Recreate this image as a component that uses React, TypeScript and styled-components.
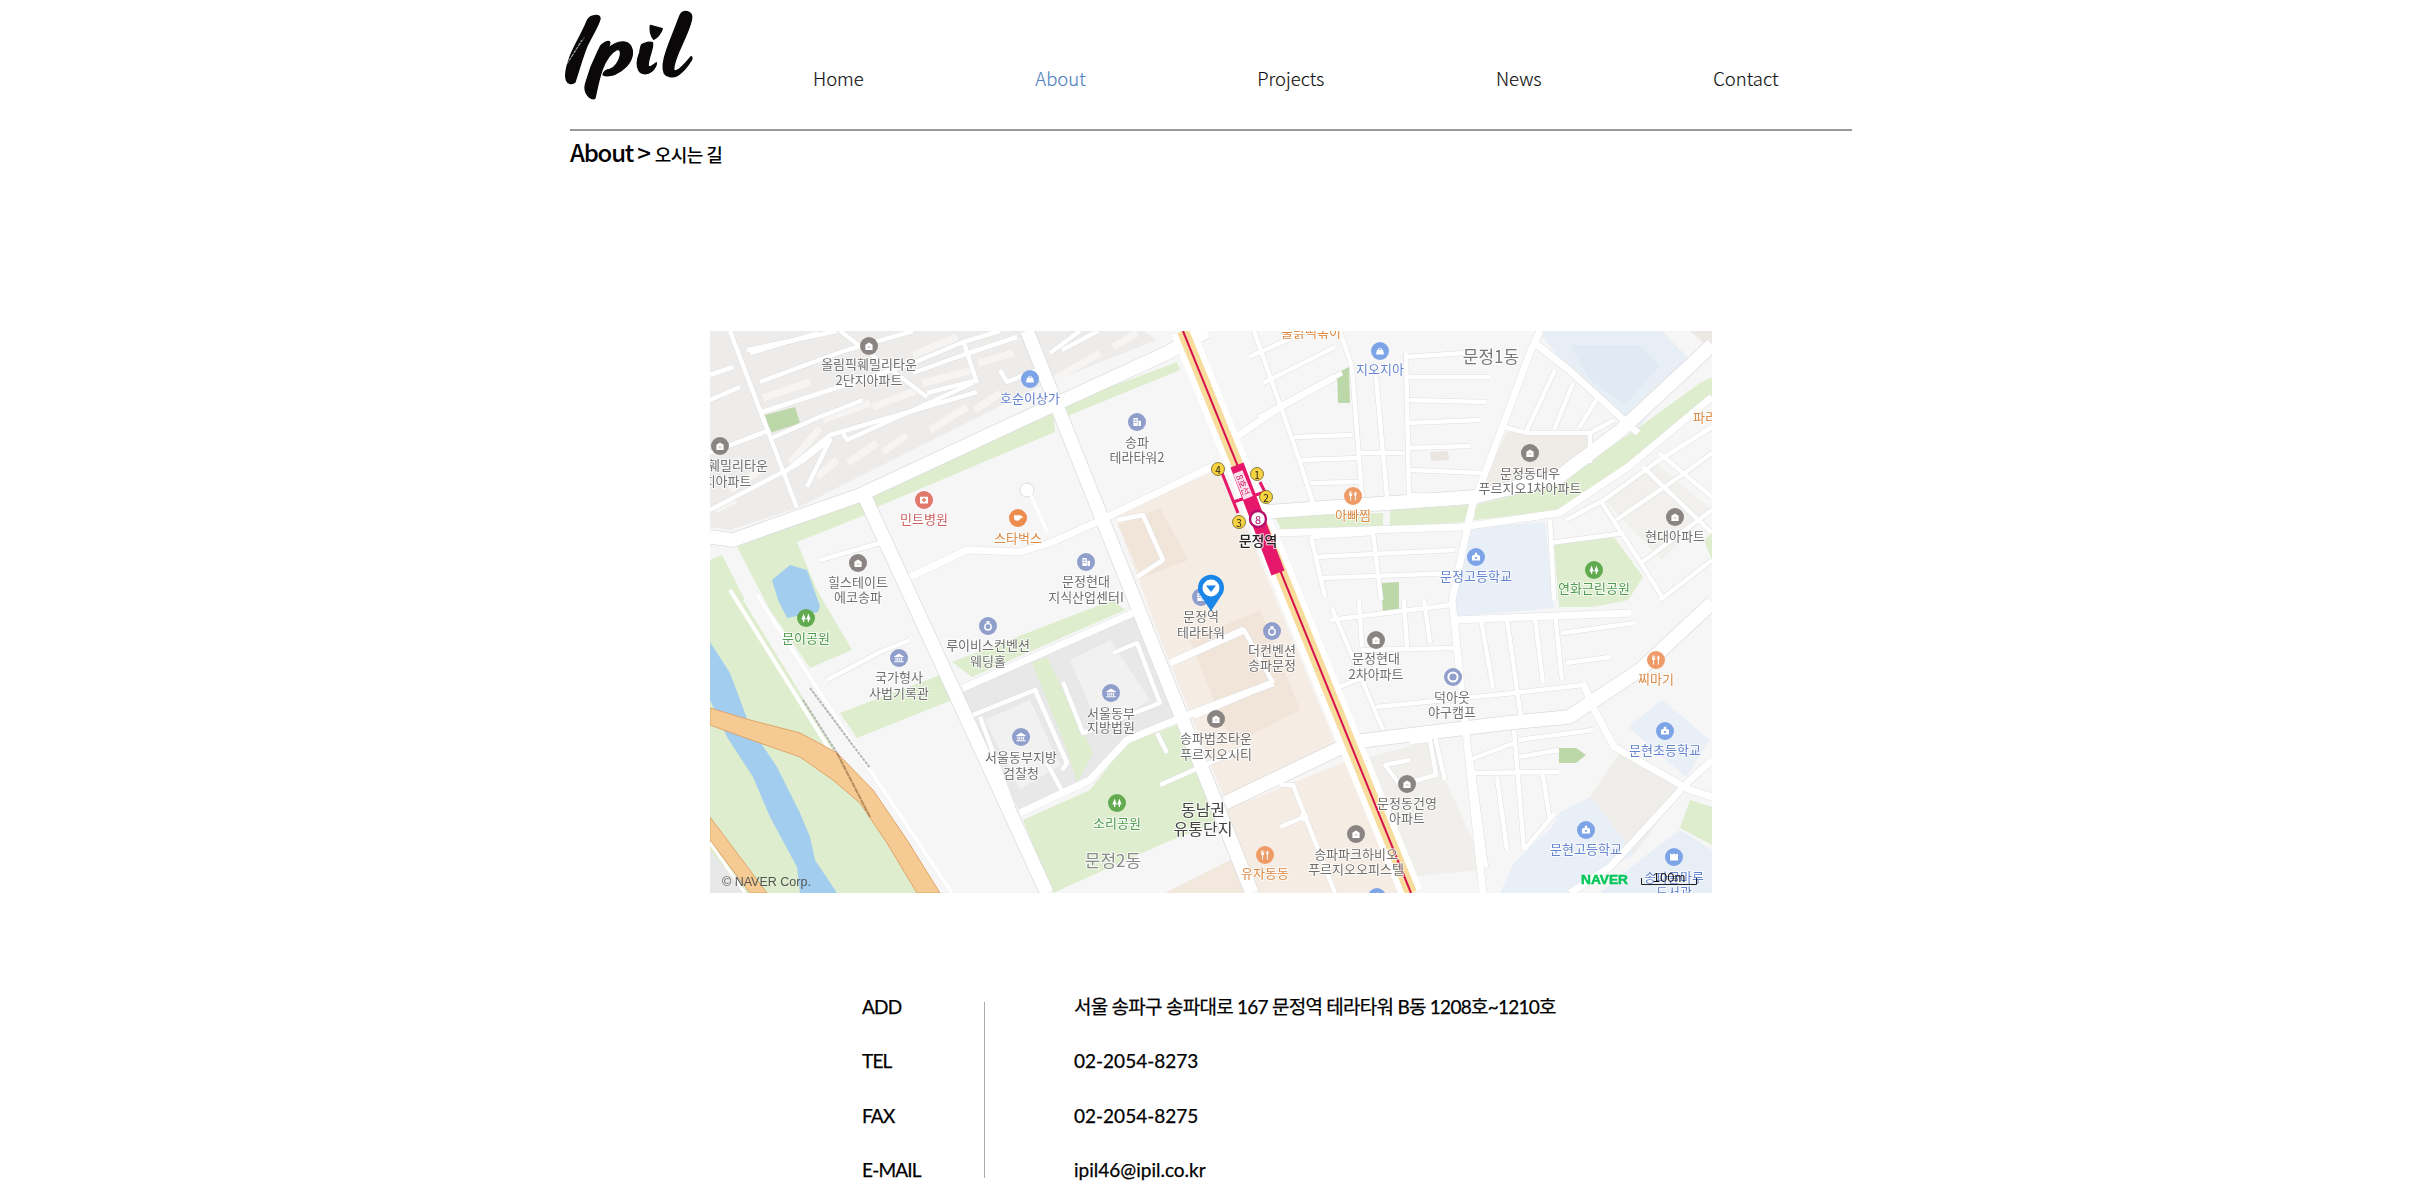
import { Fragment } from 'react'
import styled, { createGlobalStyle } from 'styled-components'

const GlobalStyle = createGlobalStyle`
  html, body {
    margin: 0;
    padding: 0;
    height: 100%;
    overflow: hidden;
    background: #fff;
  }
  body {
    font-family: "Noto Sans CJK KR", "Noto Sans", sans-serif;
    color: #000;
  }
`

const Page = styled.div`
  width: 1282px;
  margin: 0 auto;
  transform: translateX(-1px);
`

const Header = styled.header`
  display: flex;
  height: 129px;
  border-bottom: 2px solid #999;
  box-sizing: content-box;
`

const LogoBox = styled.a`
  display: block;
  flex: none;
  width: 262px;
  height: 110px;
  margin-left: -19px;
`

const Nav = styled.nav`
  display: flex;
  gap: 171.5px;
  flex: none;
  height: 100%;
  padding-top: 62px;
  box-sizing: border-box;
`

const NavItem = styled.a<{ $active?: boolean }>`
  font-size: 18.5px;
  font-weight: 300;
  line-height: 32px;
  -webkit-text-stroke: 0.15px currentColor;
  color: ${p => (p.$active ? '#4f81bd' : '#111')};
`

const Crumb = styled.div`
  display: flex;
  align-items: baseline;
  height: 39px;
  padding-top: 2px;
  font-size: 24px;
  font-weight: 500;
  line-height: 38px;
  letter-spacing: -1.2px;

  span {
    margin-left: 5px;
    font-size: 18px;
    letter-spacing: -0.6px;
  }
`

const MapFrame = styled.svg`
  display: block;
  width: 1002px;
  height: 562px;
  margin: 159px auto 0;
  background: #f6f6f7;
  filter: blur(0.35px);
`

const Label = styled.text<{ $color?: string; $size?: number; $bold?: boolean }>`
  font-family: "Noto Sans CJK KR", sans-serif;
  font-size: ${p => p.$size ?? 13}px;
  font-weight: ${p => (p.$bold ? 500 : 400)};
  fill: ${p => p.$color ?? '#6f6f6f'};
  text-anchor: middle;
  dominant-baseline: central;
  paint-order: stroke;
  stroke: rgba(255, 255, 255, 0.75);
  stroke-width: 2px;
`

const Credit = styled.text`
  font-family: "Liberation Sans", sans-serif;
  font-size: 12.5px;
  fill: #555;
`

const Brand = styled.text`
  font-family: "Liberation Sans", sans-serif;
  font-size: 13px;
  font-weight: 700;
  fill: #03c75a;
  stroke: #03c75a;
  stroke-width: 0.5px;
`

const Scale = styled.text`
  font-family: "Liberation Sans", sans-serif;
  font-size: 13px;
  fill: #111;
  text-anchor: middle;
`

const Info = styled.dl`
  position: relative;
  display: grid;
  grid-template-columns: 212px 1fr;
  grid-auto-rows: 54.3px;
  width: 990px;
  margin: 99px 0 0 292px;
  font-family: "Lato", "Noto Sans CJK KR", sans-serif;
  font-size: 19px;
  font-weight: 400;
  line-height: 30px;
  -webkit-text-stroke: 0.25px #000;

  &::before {
    content: "";
    position: absolute;
    left: 122px;
    top: 10px;
    width: 1px;
    height: 176px;
    background: #aaa;
  }
`

const Term = styled.dt`
  margin: 0;
  letter-spacing: -0.8px;
`

const Value = styled.dd<{ $tight?: boolean }>`
  margin: 0;
  letter-spacing: ${p => (p.$tight ? '-0.74px' : '0')};
`

type Area = [string, string]

const GRASS = '#deedcd'
const SCHOOL = '#e9eff7'

const areas: Area[] = [
  // apartments north west
  ['#eeecea', '710,331 1024,331 1042,385 797,508 730,530 710,527'],
  ['#eeecea', '1030,331 1048,383 1157,340 1143,331'],
  // green strips
  [GRASS, '870,492 1053,410 1055,432 877,507'],
  [GRASS, '1062,405 1177,362 1180,370 1065,417'],
  [GRASS, '737,547 863,497 870,513 797,542 817,590 852,650 810,668 770,610'],
  ['#a2cdef', '772,580 790,565 807,570 820,606 818,612 787,618 778,600'],
  [GRASS, '710,560 722,555 745,600 837,753 925,893 710,893'],
  ['#a2cdef', '710,642 730,673 745,713 750,727 777,767 800,813 810,837 815,860 837,893 800,893 797,867 770,817 753,777 727,737 710,700'],
  ['#e8e8e9', '963,692 1133,613 1178,717 1127,740 1090,780 1063,793 1020,813 973,717'],
  ['#f1f1f2', '1070,660 1110,640 1150,700 1100,730'],
  ['#f1f1f2', '985,720 1030,700 1060,765 1020,790'],
  [GRASS, '952,662 1113,600 1125,610 972,677'],
  [GRASS, '1032,663 1047,657 1093,753 1077,783 1067,750'],
  [GRASS, '840,713 940,675 952,700 857,738'],
  [GRASS, '1023,820 1090,790 1127,743 1182,723 1230,817 1167,842 1053,893'],
  // peach blocks along the boulevard
  ['#f5ece4', '1115,515 1222,468 1338,750 1225,800 1155,625'],
  ['#f1e4d9', '1118,525 1160,508 1188,560 1142,578'],
  ['#f1e4d9', '1190,640 1260,610 1300,710 1232,745'],
  ['#f5ece4', '1220,812 1345,762 1400,893 1258,893'],
  ['#f3e8de', '1120,893 1165,893 1230,860 1250,893'],
  ['#f1efec', '1369,757 1435,740 1445,780 1476,847 1480,870 1407,877'],
  // schools and blocks to the east
  [SCHOOL, '1466,528 1545,522 1554,608 1455,617 1452,600'],
  ['#e8eef5', '1538,331 1662,331 1693,363 1638,428 1593,397 1569,370'],
  ['#e1e9f2', '1570,345 1640,345 1660,365 1625,405 1590,380'],
  [GRASS, '1554,543 1614,537 1643,577 1628,600 1593,607 1559,607'],
  ['#e9eff6', '1559,813 1590,797 1635,853 1572,893 1500,893 1514,863 1552,827'],
  ['#e9eff6', '1628,727 1662,700 1710,740 1686,777'],
  ['#efedea', '1590,797 1620,753 1683,787 1635,853'],
  ['#e8eef5', '1640,860 1680,830 1712,850 1712,893 1600,893'],
  [GRASS, '1690,800 1712,807 1712,845 1680,828'],
  ['#efece8', '1507,432 1590,435 1590,463 1559,487 1490,490 1486,477'],
  ['#f2f0ed', '1604,500 1655,463 1712,510 1662,560'],
  [GRASS, '1275,517 1383,513 1383,527 1283,532'],
  [GRASS, '1390,510 1469,505 1464,522 1390,527'],
  [GRASS, '1476,505 1559,483 1628,435 1700,383 1712,377 1712,397 1628,463 1559,510 1474,520'],
  // small dark green lots
  ['#bcd8a8', '765,415 795,407 800,423 770,433'],
  ['#bcd8a8', '1337,373 1349,367 1350,403 1338,403'],
  ['#bcd8a8', '1381,583 1399,582 1399,613 1383,613'],
  ['#bcd8a8', '1559,748 1576,748 1586,755 1576,763 1559,763'],
  ['#e9e6e1', '1430,452 1448,451 1449,460 1431,461'],
  ['#ece9e4', '1690,331 1712,331 1712,350'],
  [GRASS, '1704,540 1712,533 1712,560'],
  ['#e9e8e8', '710,850 745,893 710,893'],
]

const buildingStrips: string[] = [
  '763,398 810,382', '823,420 870,403', '873,407 917,390', '913,355 957,337', '978,363 1013,353', '923,383 973,370',
  '790,463 820,428', '817,477 837,460', '848,463 877,443', '883,452 907,435', '930,430 967,407', '975,410 1000,393',
  '1053,380 1100,353', '1113,347 1137,333', '730,490 760,470', '715,510 735,500',
]

const bigRoads: string[] = [
  '710,537 733,540 860,495 1047,408 1167,353 1207,331',
  '1027,331 1252,893',
  '863,493 1047,893',
  '1225,803 1342,747',
  '1352,742 1507,723 1569,717 1640,670 1712,603',
  '1266,512 1473,497 1559,477 1621,430 1693,363 1712,345',
]

const midRoads: string[] = [
  '910,577 967,550 1020,552 1050,543 1097,522 1222,462',
  '1232,440 1280,407 1335,377',
  '1276,533 1462,527 1559,513 1628,467 1712,397',
  '1452,600 1472,507 1490,460 1531,350 1540,331',
  '1452,600 1466,733 1483,893',
  '1455,620 1631,613',
  '1535,343 1569,370 1638,433',
  '1570,893 1610,867 1690,780 1712,760',
  '963,688 1133,613',
  '1170,663 1244,630',
  '1020,813 1090,780 1127,740 1193,713 1273,683',
  '1593,707 1614,747 1690,790 1712,797',
  '1583,683 1593,707',
]

const smallRoads: string[] = [
  '730,331 797,508',
  '772,438 817,418 863,400',
  '762,412 913,363 963,342 1000,331',
  '785,472 830,435 977,392',
  '843,433 847,440 973,383',
  '750,353 818,333', '760,382 827,357 847,350 913,331', '913,373 963,355 1017,337', '927,393 977,380', '1000,370 1007,382 1037,370',
  '1050,353 1080,331', '1062,350 1098,331',
  '710,400 740,387', '710,375 733,367', '747,350 837,331',
  '840,331 927,397', '963,340 977,383', '800,463 830,440 807,487',
  '710,453 770,430', '710,510 800,463',
  '820,560 880,543', '1117,520 1143,515 1163,560 1137,577',
  '973,715 1035,690 1067,763 1062,770', '980,717 1013,807', '1063,682 1083,733 1160,703 1137,643 1113,653',
  '1047,763 1063,793', '827,680 880,652 910,640', '1157,733 1167,753',
  '1180,660 1244,630 1273,683', '1194,717 1273,683',
  '1352,367 1362,497', '1376,377 1387,497', '1406,353 1409,497',
  '1254,331 1297,453 1313,503', '1340,331 1352,367',
  '1259,417 1342,373', '1263,383 1335,347', '1249,357 1307,331',
  '1407,377 1490,377', '1407,400 1486,402', '1407,423 1480,420', '1407,448 1470,446', '1410,470 1484,473', '1410,495 1473,497',
  '1294,437 1352,435', '1300,460 1359,458', '1311,483 1359,482', '1359,453 1404,453', '1404,357 1466,353',
  '1504,427 1528,433 1590,433 1590,463', '1526,432 1555,370', '1554,430 1573,383', '1579,428 1598,397', '1590,433 1614,420',
  '1566,520 1604,500 1655,463 1712,427', '1616,520 1679,477 1712,453', '1600,500 1641,563 1662,597',
  '1643,467 1712,533', '1659,453 1712,497', '1641,563 1712,510', '1660,600 1712,560',
  '1311,537 1373,533 1381,600', '1314,557 1455,550', '1321,578 1455,573', '1311,537 1325,597', '1550,520 1554,600', '1550,543 1624,533',
  '1404,600 1407,647', '1424,600 1430,643', '1481,620 1493,688', '1507,620 1521,717', '1535,617 1543,683', '1555,613 1562,680',
  '1562,633 1635,623', '1566,663 1610,657', '1332,608 1383,730', '1359,600 1362,647', '1362,650 1455,648',
  '1376,707 1514,693 1583,685', '1332,690 1376,672', '1330,620 1450,605',
  '1435,737 1445,780', '1466,737 1473,773', '1514,730 1524,850', '1469,773 1559,772', '1469,760 1514,743', '1519,740 1593,730',
  '1519,757 1559,750', '1473,773 1486,867', '1497,777 1507,850', '1542,770 1550,820', '1524,850 1555,813',
  '1410,742 1430,740 1436,775 1400,785 1385,765 1410,760',
  '1280,785 1293,785 1335,893', '1280,827 1304,817', '1250,745 1160,785',
]

type Poi = [number, number, string, string]

const pois: Poi[] = [
  [869, 346, '#8a8583', 'home'], [720, 446, '#8a8583', 'home'], [858, 563, '#8a8583', 'home'],
  [1530, 453, '#8a8583', 'home'], [1675, 517, '#8a8583', 'home'], [1376, 640, '#8a8583', 'home'],
  [1216, 719, '#8a8583', 'home'], [1407, 784, '#8a8583', 'home'], [1356, 834, '#8a8583', 'home'],
  [1030, 379, '#7ea4e8', 'bag'], [1380, 351, '#7ea4e8', 'bag'],
  [1137, 422, '#8f9ecb', 'office'], [1086, 562, '#8f9ecb', 'office'], [1201, 597, '#8f9ecb', 'office'],
  [924, 500, '#e0786c', 'cross'], [1018, 518, '#ee8c50', 'cup'],
  [806, 618, '#61aa50', 'tree'], [1117, 803, '#61aa50', 'tree'], [1594, 570, '#61aa50', 'tree'],
  [988, 626, '#8f9ecb', 'ring'], [1272, 631, '#8f9ecb', 'ring'],
  [899, 658, '#8f9ecb', 'hall'], [1111, 693, '#8f9ecb', 'hall'], [1021, 737, '#8f9ecb', 'hall'],
  [1353, 496, '#ef9b68', 'fork'], [1656, 660, '#ef9b68', 'fork'], [1265, 855, '#ef9b68', 'fork'],
  [1476, 557, '#7ea4e8', 'school'], [1586, 830, '#7ea4e8', 'school'], [1665, 731, '#7ea4e8', 'school'],
  [1674, 857, '#7ea4e8', 'book'], [1453, 677, '#8f9ecb', 'target'], [1377, 897, '#7ea4e8', 'school'],
]

type Text = [number, number, string, string?, number?, boolean?]

const BLUE = '#6484cf'
const ORANGE = '#dc8a45'
const GREEN = '#4f9a4f'

const labels: Text[] = [
  [869, 363, '올림픽훼밀리타운'], [869, 379, '2단지아파트'], [1030, 397, '호순이상가', BLUE],
  [720, 464, '올림픽훼밀리타운'], [718, 480, '1단지아파트'],
  [1137, 441, '송파'], [1137, 456, '테라타워2'], [924, 518, '민트병원', '#cc5f5f'], [1018, 537, '스타벅스', ORANGE],
  [858, 581, '힐스테이트'], [858, 596, '에코송파'], [1086, 580, '문정현대'], [1086, 596, '지식산업센터I'],
  [806, 637, '문이공원', GREEN], [988, 644, '루이비스컨벤션'], [988, 660, '웨딩홀'], [899, 676, '국가형사'], [899, 692, '사법기록관'],
  [1111, 712, '서울동부'], [1111, 726, '지방법원'], [1021, 756, '서울동부지방'], [1021, 772, '검찰청'],
  [1117, 822, '소리공원', GREEN], [1113, 859, '문정2동', '#8a8a8a', 17], [1203, 809, '동남권', '#444', 16], [1203, 828, '유통단지', '#444', 16],
  [1201, 615, '문정역'], [1201, 631, '테라타워'], [1272, 649, '더컨벤션'], [1272, 664, '송파문정'],
  [1376, 657, '문정현대'], [1376, 673, '2차아파트'], [1452, 696, '덕아웃'], [1452, 711, '야구캠프'], [1656, 678, '찌마기', ORANGE],
  [1216, 737, '송파법조타운'], [1216, 753, '푸르지오시티'], [1407, 802, '문정동건영'], [1407, 817, '아파트'],
  [1356, 853, '송파파크하비오'], [1356, 868, '푸르지오오피스텔'], [1265, 872, '유자동동', ORANGE],
  [1586, 848, '문현고등학교', BLUE], [1665, 749, '문현초등학교', BLUE], [1674, 876, '송파글마루', BLUE], [1674, 891, '도서관', BLUE],
  [1380, 368, '지오지아', BLUE], [1491, 355, '문정1동', '#777', 17], [1530, 472, '문정동대우'], [1530, 487, '푸르지오1차아파트'],
  [1353, 514, '아빠찜', ORANGE], [1258, 540, '문정역', '#222', 14, true], [1675, 535, '현대아파트'], [1476, 575, '문정고등학교', BLUE],
  [1594, 587, '연화근린공원', GREEN], [1723, 416, '파리바게뜨', ORANGE], [1311, 331, '불닭떡볶이', ORANGE],
]

const Glyph = ({ kind }: { kind: string }) => {
  switch (kind) {
    case 'home':
      return <path d="M-4.5 5V-1.5L0 -4.5L4.5 -1.5V5ZM-1.5 0.5V2H-0.4V0.5ZM0.6 0.5V2H1.7V0.5Z" fill="#fff" fillRule="evenodd" />
    case 'bag':
      return <path d="M-5 4.5L-3.8 -1.5H-2.4C-2.4 -5 2.4 -5 2.4 -1.5H3.8L5 4.5ZM-1.4 -1.5H1.4C1.4 -3.6 -1.4 -3.6 -1.4 -1.5Z" fill="#fff" fillRule="evenodd" />
    case 'office':
      return <path d="M-4.5 -5H1V5H-4.5ZM1.8 -1.5H5V5H1.8ZM-3.2 -3V-1.6H-0.4V-3ZM-3.2 0V1.4H-0.4V0Z" fill="#fff" fillRule="evenodd" />
    case 'cross':
      return <path d="M-5 -4H5V4.5H-5ZM-0.9 -2.6V-0.9H-2.6V0.9H-0.9V2.6H0.9V0.9H2.6V-0.9H0.9V-2.6Z" fill="#fff" fillRule="evenodd" />
    case 'cup':
      return <path d="M-5 -3.5H3V0C3 2 1.5 3.5 -1 3.5C-3.5 3.5 -5 2 -5 0ZM3 -2.8H5.5V0.2H3Z" fill="#fff" />
    case 'tree':
      return <path d="M-3 -5.5L-0.2 2H-2.2V5H-3.8V2H-5.8ZM3 -5.5L5.8 2H3.8V5H2.2V2H0.2Z" fill="#fff" />
    case 'ring':
      return (
        <>
          <circle cy={1} r={4} fill="none" stroke="#fff" strokeWidth={1.8} />
          <path d="M-2.5 -6H2.5L1.2 -3H-1.2Z" fill="#fff" />
        </>
      )
    case 'hall':
      return <path d="M0 -5.5L6 -2V-1H-6V-2ZM-4.5 0H-3V3.5H-4.5ZM-2.2 0H-0.8V3.5H-2.2ZM0.2 0H1.6V3.5H0.2ZM2.5 0H4V3.5H2.5ZM-6 4H6V5.2H-6Z" fill="#fff" />
    case 'fork':
      return <path d="M-5 -5.5V-1.5C-5 -0.3 -4.3 0.2 -3.6 0.4V5.5H-2.4V0.4C-1.7 0.2 -1 -0.3 -1 -1.5V-5.5L-1.8 -5.5V-2.5H-2.5V-5.5H-3.5V-2.5H-4.2V-5.5ZM3 -5.5C1.2 -4 1.2 -1 2.4 0.4V5.5H3.6V0.4C4.8 -1 4.8 -4 3 -5.5Z" fill="#fff" />
    case 'school':
      return <path d="M-5 4.5V-1.5L-1.5 -2.8V-5L1.5 -5.5V-2.8L5 -1.5V4.5ZM-1.3 0V2.2H1.3V0Z" fill="#fff" fillRule="evenodd" />
    case 'book':
      return <path d="M-5 -4.5L-2.5 -3L0 -4.5L2.5 -3L5 -4.5V4.5H-5Z" fill="#fff" />
    case 'target':
      return (
        <>
          <circle r={7} fill="#fff" />
          <circle r={4.5} fill="#8f9ecb" />
        </>
      )
    default:
      return null
  }
}

const Logo = () => (
  <svg viewBox="0 0 480 330" width="160" height="110" xmlns="http://www.w3.org/2000/svg">
    <g fill="#0a0808" stroke="#0a0808" strokeWidth={4} strokeLinejoin="round">
      <path d="M126 48C135 44 148 46 147 56C146 70 122 108 108 138C96 166 84 210 72 246C64 254 50 252 46 240C40 222 46 200 58 168C72 132 96 96 108 64C112 54 118 50 126 48Z" />
      <path d="M152 134C160 128 172 122 176 126C178 132 172 142 170 146C182 136 200 124 218 126C238 128 246 144 244 164C240 190 218 212 190 224C176 228 162 228 156 224C158 216 166 208 176 208C192 204 204 184 208 166C210 152 206 146 196 150C180 158 164 182 154 208C144 234 138 268 132 294C126 300 116 294 110 286C102 276 100 264 104 250C114 214 132 172 142 152C146 144 148 138 152 134Z" />
      <path d="M298 76L334 86C330 100 318 114 308 118C300 108 296 90 298 76Z" />
      <path d="M272 134C282 128 298 124 304 128C308 134 302 150 298 164C294 178 290 192 292 198C296 204 306 196 316 188C318 192 312 206 302 214C290 224 272 224 264 212C256 198 258 178 266 158C268 150 268 140 272 134Z" />
      <path d="M396 36C406 32 422 36 422 50C424 68 404 108 392 136C380 162 368 190 368 208C370 216 378 212 386 206C398 196 412 180 420 170C424 170 424 176 420 182C410 198 396 216 380 226C364 234 346 230 340 220C332 204 338 176 348 148C360 114 376 76 384 54C388 44 390 38 396 36Z" />
    </g>
    <path d="M48 192L100 112M54 182L92 120" stroke="#fff" strokeWidth={1.5} strokeDasharray="10 3" fill="none" />
  </svg>
)

const IpilMap = () => (
  <MapFrame viewBox="710 331 1002 562" xmlns="http://www.w3.org/2000/svg">
    {areas.map(([color, points], i) => (
      <polygon key={i} points={points} fill={color} />
    ))}
    {buildingStrips.map((points, i) => (
      <polyline key={i} points={points} fill="none" stroke="#f6f5f3" strokeWidth={7} />
    ))}
    {/* rail corridor */}
    <polygon points="743,600 837,753 925,893 952,893 870,770 757,590" fill="#f6f6f7" />
    <polyline points="730,590 830,750 925,893" fill="none" stroke="#fff" strokeWidth={4} />
    <polyline points="757,595 870,770 952,893" fill="none" stroke="#fff" strokeWidth={3} />
    <polyline points="810,688 870,768" fill="none" stroke="#b5b5b5" strokeWidth={2} strokeDasharray="3 1" />
    <polyline points="803,700 837,753" fill="none" stroke="#b5b5b5" strokeWidth={2} strokeDasharray="3 1" />

    {/* expressway */}
    <polygon
      points="710,708 750,720 800,733 837,753 873,790 907,840 940,893 917,893 887,843 860,803 833,780 800,757 757,742 710,725"
      fill="#f6cb93"
      stroke="#dfa468"
    />
    <polyline points="837,753 870,817" fill="none" stroke="#b58d5e" strokeWidth={2} strokeDasharray="6 0.6" />
    <polygon points="710,817 767,893 750,893 710,840" fill="#f6cb93" stroke="#dfa468" />
    <polyline points="710,843 745,893" fill="none" stroke="#fff" strokeWidth={3} />

    {bigRoads.map((points, i) => (
      <polyline key={i} points={points} fill="none" stroke="#dcdcdc" strokeWidth={15} strokeLinejoin="round" />
    ))}
    {midRoads.map((points, i) => (
      <polyline key={i} points={points} fill="none" stroke="#e2e2e2" strokeWidth={8} strokeLinejoin="round" />
    ))}
    {smallRoads.map((points, i) => (
      <polyline key={i} points={points} fill="none" stroke="#dedede" strokeWidth={5.5} strokeLinejoin="round" />
    ))}
    {bigRoads.map((points, i) => (
      <polyline key={i} points={points} fill="none" stroke="#fff" strokeWidth={13.5} strokeLinejoin="round" />
    ))}
    {midRoads.map((points, i) => (
      <polyline key={i} points={points} fill="none" stroke="#fff" strokeWidth={7} strokeLinejoin="round" />
    ))}
    {smallRoads.map((points, i) => (
      <polyline key={i} points={points} fill="none" stroke="#fff" strokeWidth={4.5} strokeLinejoin="round" />
    ))}
    <circle cx={1027} cy={490} r={7} fill="#fff" stroke="#ddd" />
    <polyline points="1031,495 1047,532" fill="none" stroke="#fff" strokeWidth={3} />
    <circle cx={1304} cy={817} r={4} fill="#fff" />

    {/* boulevard and subway line */}
    <polyline points="1183,331 1411,893" fill="none" stroke="#fff" strokeWidth={24} />
    <polyline points="1183,331 1411,893" fill="none" stroke="#f8dc9c" strokeWidth={12} />
    <polyline points="1183,331 1411,893" fill="none" stroke="#d5124f" strokeWidth={2} />

    {/* station */}
    <polyline points="1237,465 1278,573" fill="none" stroke="#e6186b" strokeWidth={14} />
    <polyline points="1222,473 1238,513" fill="none" stroke="#e6186b" strokeWidth={3} />
    <polyline points="1233,502 1265,492 1260,482" fill="none" stroke="#e6186b" strokeWidth={3} />
    <g transform="translate(1243 485) rotate(68)">
      <rect x={-14} y={-5} width={28} height={10} fill="#fbe2ec" />
      <Label $color="#d41a66" $size={9} style={{ stroke: 'none' }}>8호선</Label>
    </g>
    {([[1218, 469, '4'], [1257, 474, '1'], [1266, 497, '2'], [1239, 522, '3']] as [number, number, string][]).map(([x, y, n]) => (
      <g key={n} transform={`translate(${x} ${y})`}>
        <circle r={6.5} fill="#f7d33f" stroke="#5a4a10" strokeWidth={0.7} />
        <Label $color="#222" $size={10} style={{ stroke: 'none' }}>{n}</Label>
      </g>
    ))}
    <g transform="translate(1258 519)">
      <circle r={8} fill="#fff" stroke="#b30f6c" strokeWidth={2.4} />
      <Label $color="#b30f6c" $size={11} style={{ stroke: 'none' }}>8</Label>
    </g>

    {pois.map(([x, y, color, kind], i) => (
      <g key={i} transform={`translate(${x} ${y})`}>
        <circle r={9} fill={color} />
        <g transform="scale(0.8)"><Glyph kind={kind} /></g>
      </g>
    ))}

    {labels.map(([x, y, text, color, size, bold], i) => (
      <Label key={i} x={x} y={y} $color={color} $size={size} $bold={bold}>{text}</Label>
    ))}

    {/* location marker */}
    <path d="M1211 611L1201 596A13 13 0 1 1 1221 596Z" fill="#1a86e8" />
    <circle cx={1211} cy={588} r={8.5} fill="#fff" />
    <path d="M1206 585.5H1216L1211 592Z" fill="#1a86e8" />

    <Credit x={722} y={886}>© NAVER Corp.</Credit>
    <Brand x={1581} y={884} textLength={47} lengthAdjust="spacingAndGlyphs">NAVER</Brand>
    <Scale x={1669} y={882}>100m</Scale>
    <path d="M1641.5 878V884.5H1696.5V878" fill="none" stroke="#222" />
  </MapFrame>
)

const contact = [
  ['ADD', '서울 송파구 송파대로 167 문정역 테라타워 B동 1208호~1210호'],
  ['TEL', '02-2054-8273'],
  ['FAX', '02-2054-8275'],
  ['E-MAIL', 'ipil46@ipil.co.kr'],
]

const menu = ['Home', 'About', 'Projects', 'News', 'Contact']

const App = () => {
  return (
    <>
      <GlobalStyle />
      <Page>
        <Header>
          <LogoBox><Logo /></LogoBox>
          <Nav>
            {menu.map(item => (
              <NavItem key={item} $active={item === 'About'}>{item}</NavItem>
            ))}
          </Nav>
        </Header>
        <Crumb>About &gt;<span>오시는 길</span></Crumb>
        <IpilMap />
        <Info>
          {contact.map(([term, value]) => (
            <Fragment key={term}>
              <Term>{term}</Term>
              <Value $tight={term === 'ADD'}>{value}</Value>
            </Fragment>
          ))}
        </Info>
      </Page>
    </>
  )
}

export default App
